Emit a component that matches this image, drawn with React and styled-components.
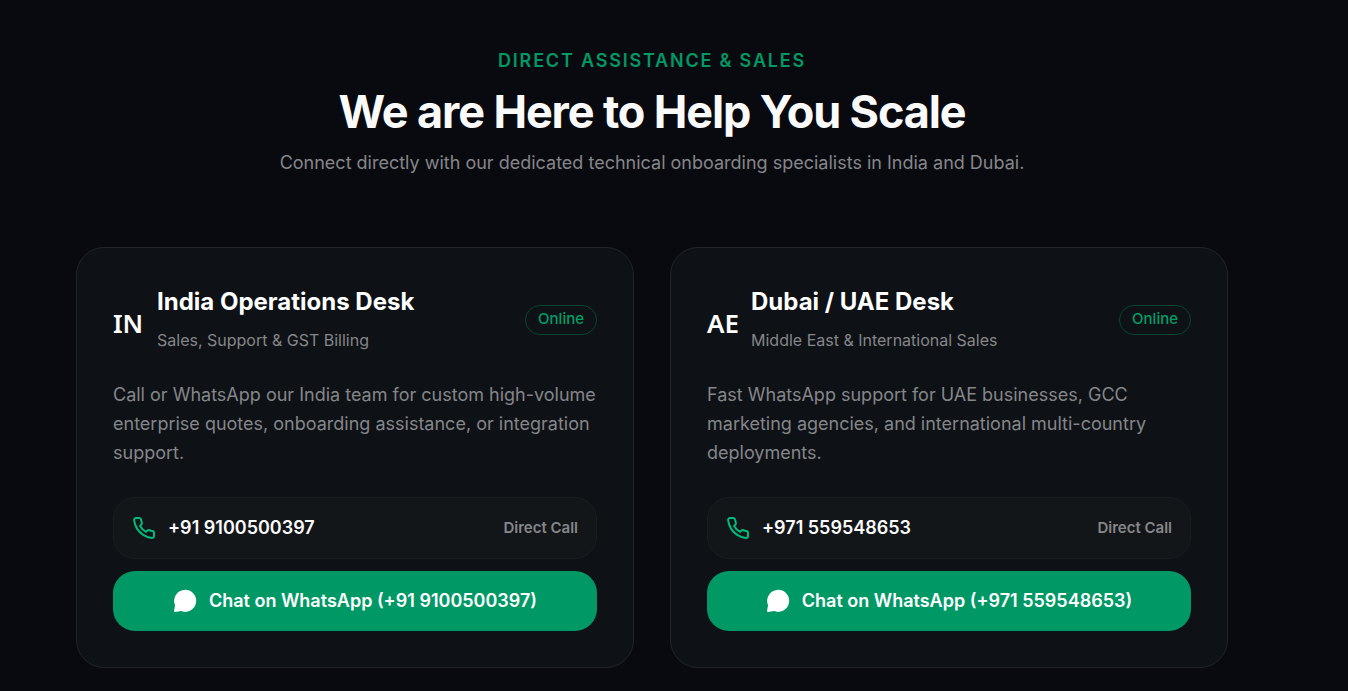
import React from "react";
import styled, { createGlobalStyle } from "styled-components";

const GlobalStyle = createGlobalStyle`
  *, *::before, *::after { box-sizing: border-box; }
  html { background: #090a0f; }
  body {
    margin: 0;
    background: #090a0f;
    color: #ffffff;
    font-family: Inter, "Liberation Sans", sans-serif;
  }
`;

const Section = styled.section`
  padding: 48px 120px 24px 76px;
  @media (max-width: 900px) {
    padding: 48px 24px;
  }
`;

const Container = styled.div`
  max-width: 1152px;
  margin: 0 auto;
`;

const Header = styled.header`
  display: flex;
  flex-direction: column;
  align-items: center;
  text-align: center;
  margin-bottom: 70px;
`;

const Eyebrow = styled.p`
  margin: 0 0 10px;
  font-size: 18px;
  line-height: 26px;
  font-weight: 600;
  letter-spacing: 0.1em;
  text-transform: uppercase;
  color: #009966;
`;

const Heading = styled.h2`
  margin: 0 0 8px;
  font-size: 45px;
  line-height: 56px;
  font-weight: 700;
  letter-spacing: -0.025em;
  color: #fafafa;
`;

const Lead = styled.p`
  margin: 0;
  font-size: 18px;
  line-height: 29px;
  color: #85868a;
`;

const Grid = styled.div`
  display: grid;
  grid-template-columns: repeat(2, minmax(0, 1fr));
  gap: 36px;
  @media (max-width: 900px) {
    grid-template-columns: minmax(0, 1fr);
  }
`;

const Card = styled.article`
  padding: 36px;
  border: 1px solid #212529;
  border-radius: 28px;
  background: #0e1115;
`;

const CardHead = styled.div`
  display: flex;
  align-items: center;
  justify-content: space-between;
  gap: 12px;
  margin-bottom: 24px;
`;

const Identity = styled.div`
  display: flex;
  align-items: center;
  gap: 12px;
`;

const Country = styled.span`
  min-width: 32px;
  padding-top: 6px;
  font-family: "Noto Sans", sans-serif;
  font-size: 26px;
  line-height: 36px;
  font-weight: 600;
`;

const Title = styled.h3`
  margin: 0 0 6px;
  font-size: 24px;
  line-height: 36px;
  font-weight: 700;
`;

const Subtitle = styled.p`
  margin: 0;
  padding-bottom: 2px;
  font-size: 16px;
  line-height: 28px;
  color: #85868a;
`;

const Badge = styled.span`
  padding: 0 12px 2px;
  border: 1px solid #07452f;
  border-radius: 15px;
  font-size: 15px;
  line-height: 26px;
  font-weight: 500;
  color: #009f68;
`;

const Description = styled.p`
  margin: 0 0 30px;
  font-size: 18px;
  line-height: 29px;
  color: #85868a;
`;

const Actions = styled.div`
  display: flex;
  flex-direction: column;
  gap: 12px;
`;

const CallLink = styled.a`
  display: flex;
  align-items: center;
  gap: 12px;
  min-height: 62px;
  padding: 0 18px;
  border: 1px solid #191d20;
  border-radius: 22px;
  background: #131619;
  color: #fafafa;
  font-size: 18px;
  font-weight: 600;
  text-decoration: none;
`;

const Label = styled.span`
  padding-bottom: 2px;
`;

const CallHint = styled(Label)`
  margin-left: auto;
  font-size: 15px;
  color: #85868a;
`;

const ChatLink = styled.a`
  display: flex;
  align-items: center;
  justify-content: center;
  gap: 12px;
  min-height: 60px;
  border-radius: 22px;
  background: #009966;
  color: #ffffff;
  font-size: 18px;
  font-weight: 600;
  text-decoration: none;
`;

const Icon = styled.svg`
  width: 24px;
  height: 24px;
  flex: none;
`;

const PhoneIcon = () => (
  <Icon viewBox="0 0 24 24" fill="none" stroke="#00bc7d" strokeWidth="2" strokeLinecap="round" strokeLinejoin="round" aria-hidden="true">
    <path d="M22 16.92v3a2 2 0 0 1-2.18 2 19.79 19.79 0 0 1-8.63-3.07 19.5 19.5 0 0 1-6-6 19.79 19.79 0 0 1-3.07-8.67A2 2 0 0 1 4.11 2h3a2 2 0 0 1 2 1.72 12.84 12.84 0 0 0 .7 2.81 2 2 0 0 1-.45 2.11L8.09 9.91a16 16 0 0 0 6 6l1.27-1.27a2 2 0 0 1 2.11-.45 12.84 12.84 0 0 0 2.81.7A2 2 0 0 1 22 16.92z" />
  </Icon>
);

const ChatIcon = () => (
  <Icon viewBox="0 0 24 24" fill="#fff" stroke="#fff" strokeWidth="2" strokeLinecap="round" strokeLinejoin="round" aria-hidden="true">
    <path d="M7.9 20.9A10 10 0 1 0 3.1 16.1L2 22Z" />
  </Icon>
);

const desks = [
  {
    country: "IN",
    title: "India Operations Desk",
    subtitle: "Sales, Support & GST Billing",
    description:
      "Call or WhatsApp our India team for custom high-volume enterprise quotes, onboarding assistance, or integration support.",
    phone: "+91 9100500397",
  },
  {
    country: "AE",
    title: "Dubai / UAE Desk",
    subtitle: "Middle East & International Sales",
    description:
      "Fast WhatsApp support for UAE businesses, GCC marketing agencies, and international multi-country deployments.",
    phone: "+971 559548653",
  },
];

const DeskCard = ({ desk }) => (
  <Card>
    <CardHead>
      <Identity>
        <Country>{desk.country}</Country>
        <div>
          <Title>{desk.title}</Title>
          <Subtitle>{desk.subtitle}</Subtitle>
        </div>
      </Identity>
      <Badge>Online</Badge>
    </CardHead>
    <Description>{desk.description}</Description>
    <Actions>
      <CallLink href={`tel:${desk.phone.replace(" ", "")}`}>
        <PhoneIcon />
        <Label>{desk.phone}</Label>
        <CallHint>Direct Call</CallHint>
      </CallLink>
      <ChatLink href={`https://wa.me/${desk.phone.replace(/\D/g, "")}`}>
        <ChatIcon />
        <Label>Chat on WhatsApp ({desk.phone})</Label>
      </ChatLink>
    </Actions>
  </Card>
);

export default function App() {
  return (
    <>
      <GlobalStyle />
      <Section>
        <Container>
          <Header>
            <Eyebrow>Direct Assistance &amp; Sales</Eyebrow>
            <Heading>We are Here to Help You Scale</Heading>
            <Lead>
              Connect directly with our dedicated technical onboarding specialists in India and Dubai.
            </Lead>
          </Header>
          <Grid>
            {desks.map((desk) => (
              <DeskCard key={desk.country} desk={desk} />
            ))}
          </Grid>
        </Container>
      </Section>
    </>
  );
}
